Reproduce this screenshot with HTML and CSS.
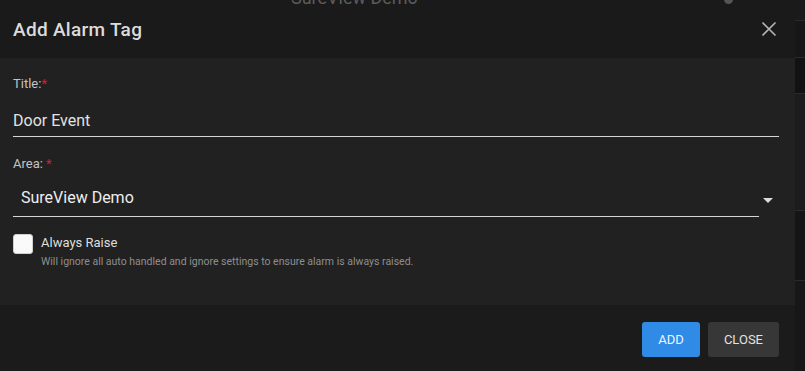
FILE: index.html
```html
<!DOCTYPE html>
<html lang="en">
<head>
    <meta charset="UTF-8">
    <meta name="viewport" content="width=device-width, initial-scale=1.0">
    <title>Add Alarm Tag</title>
    <link rel="stylesheet" href="styles.css">
</head>
<body>
    <div class="page">
        <div class="backdrop-title">SureView Demo</div>
        <div class="backdrop-dot"></div>

        <div class="dialog">
            <div class="dialog-header">
                <h2>Add Alarm Tag</h2>
                <button class="icon-btn" aria-label="Close">
                    <svg viewBox="0 0 24 24" width="24" height="24">
                        <path d="M5.5 5.5 18.5 18.5M18.5 5.5 5.5 18.5" stroke="currentColor" stroke-width="1.6" fill="none"/>
                    </svg>
                </button>
            </div>

            <div class="dialog-body">
                <label class="field-label">Title:<span class="req">*</span></label>
                <div class="text-input">Door Event</div>

                <label class="field-label area-label">Area: <span class="req">*</span></label>
                <div class="select-row">
                    <div class="select-input">SureView Demo</div>
                    <span class="caret"></span>
                </div>

                <div class="check-row">
                    <span class="checkbox"></span>
                    <div>
                        <div class="check-title">Always Raise</div>
                        <div class="check-help">Will ignore all auto handled and ignore settings to ensure alarm is always raised.</div>
                    </div>
                </div>
            </div>

            <div class="dialog-footer">
                <button class="btn btn-primary">Add</button>
                <button class="btn btn-secondary">Close</button>
            </div>
        </div>

        <div class="backdrop-edge">
            <div class="edge-row r1"></div>
            <div class="edge-row r2"></div>
            <div class="edge-row r3"></div>
            <div class="edge-row r4"></div>
            <div class="edge-row r5"></div>
            <div class="edge-row r6"></div>
        </div>
    </div>
</body>
</html>
```

FILE: styles.css
```css
* {
    box-sizing: border-box;
}

body {
    margin: 0;
    font-family: Roboto, 'Liberation Sans', sans-serif;
    background-color: #151515;
    color: #e0e0e0;
    overflow: hidden;
}

.page {
    position: relative;
    display: flex;
    height: 371px;
}

.backdrop-title {
    position: absolute;
    top: -13px;
    left: 291px;
    font-size: 18px;
    color: #5c5c5c;
    z-index: 2;
}

.backdrop-dot {
    position: absolute;
    top: -5px;
    left: 724px;
    width: 9px;
    height: 9px;
    border-radius: 50%;
    background: #555;
    z-index: 2;
}

.dialog {
    width: 795px;
    display: flex;
    flex-direction: column;
}

.dialog-header {
    height: 58px;
    background: #1a1a1a;
    display: flex;
    align-items: center;
    justify-content: space-between;
    padding: 0 14px 0 13px;
}

.dialog-header h2 {
    margin: 0;
    font-size: 19px;
    font-weight: 500;
    color: #dcdcdc;
    letter-spacing: 0.3px;
}

.icon-btn {
    background: none;
    border: none;
    padding: 0;
    color: #b5b5b5;
    display: flex;
    cursor: pointer;
}

.dialog-body {
    height: 247px;
    background: #212121;
    padding: 18px 16px 0 13px;
}

.field-label {
    display: block;
    font-size: 13px;
    line-height: 16px;
    color: #c4c4c4;
}

.req {
    color: #d3203a;
}

.text-input {
    margin-top: 15px;
    padding: 4px 0 5px;
    font-size: 16px;
    line-height: 20px;
    color: #e2e2e2;
    border-bottom: 1px solid #d6d6d6;
}

.area-label {
    margin-top: 19px;
}

.select-row {
    display: flex;
    align-items: center;
    margin-top: 12px;
}

.select-input {
    flex: 1;
    padding: 4px 0 8px 8px;
    font-size: 16px;
    line-height: 20px;
    color: #eeeeee;
    border-bottom: 1px solid #d6d6d6;
}

.caret {
    width: 0;
    height: 0;
    margin: 0 6px 0 4px;
    border-left: 5px solid transparent;
    border-right: 5px solid transparent;
    border-top: 5px solid #dcdcdc;
}

.check-row {
    display: flex;
    gap: 8px;
    margin-top: 17px;
}

.checkbox {
    flex: none;
    width: 20px;
    height: 20px;
    border-radius: 3px;
    background: #fafafa;
    border: 1px solid #d0d0d0;
}

.check-title {
    font-size: 13px;
    line-height: 18px;
    color: #dedede;
}

.check-help {
    margin-top: 4px;
    font-size: 10.5px;
    line-height: 12px;
    color: #8e8e8e;
}

.dialog-footer {
    flex: 1;
    background: #1b1b1b;
    display: flex;
    justify-content: flex-end;
    align-items: flex-start;
    gap: 8px;
    padding: 17px 16px 0;
}

.btn {
    height: 35px;
    border: none;
    border-radius: 3px;
    font-family: inherit;
    font-size: 13px;
    text-transform: uppercase;
    padding: 0 16px;
    cursor: pointer;
}

.btn-primary {
    background: #2f8be6;
    color: #eef5ff;
}

.btn-secondary {
    background: #373737;
    color: #e2e2e2;
}

.backdrop-edge {
    flex: 1;
    display: flex;
    flex-direction: column;
}

.edge-row {
    border-top: 1px solid #2a2a2a;
}

.r1 { height: 20px; background: #1a1a1a; border-top: none; }
.r2 { height: 37px; background: #171717; }
.r3 { height: 36px; background: #121212; }
.r4 { height: 117px; background: #1c1c1c; }
.r5 { height: 70px; background: #151515; }
.r6 { flex: 1; background: #171717; }
```
